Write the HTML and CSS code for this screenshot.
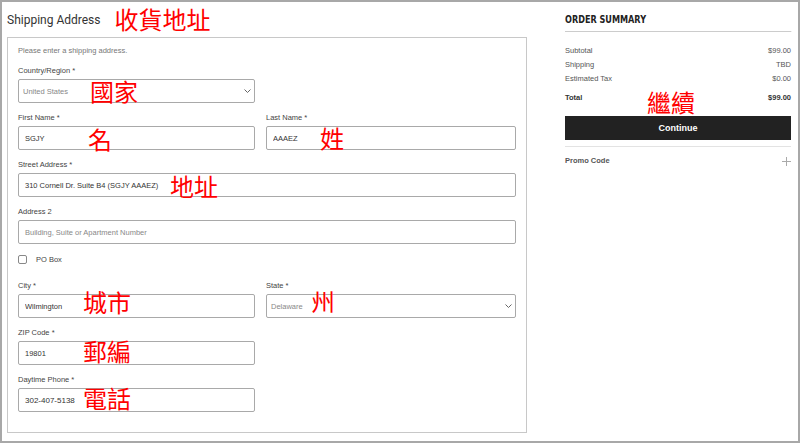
FILE: index.html
```html
<!DOCTYPE html>
<html lang="zh-Hant">
<head>
    <meta charset="UTF-8">
    <meta name="viewport" content="width=device-width, initial-scale=1.0">
    <title>Shipping Address</title>
    <link rel="stylesheet" href="styles.css">
</head>
<body>
    <div class="frame">
        <div class="shipping">
            <div class="page-title">
                <h1>Shipping Address</h1>
                <span class="note note-title">收貨地址</span>
            </div>

            <form class="address-box">
                <p class="intro">Please enter a shipping address.</p>

                <div class="grid">
                    <div class="field">
                        <label>Country/Region *</label>
                        <div class="select-wrap">
                            <select class="input placeholder">
                                <option>United States</option>
                            </select>
                            <svg class="chevron" width="7" height="4" viewBox="0 0 7 4"><path d="M0.5 0.5l3 3 3-3" fill="none" stroke="#666" stroke-width="1"/></svg>
                        </div>
                        <span class="note" style="left:72px;top:14px">國家</span>
                    </div>
                    <div></div>

                    <div class="field">
                        <label>First Name *</label>
                        <input class="input" type="text" value="SGJY">
                        <span class="note" style="left:70px;top:15px">名</span>
                    </div>
                    <div class="field">
                        <label>Last Name *</label>
                        <input class="input" type="text" value="AAAEZ">
                        <span class="note" style="left:54px;top:14px">姓</span>
                    </div>

                    <div class="field wide">
                        <label>Street Address *</label>
                        <input class="input" type="text" value="310 Cornell Dr. Suite B4 (SGJY AAAEZ)">
                        <span class="note" style="left:152px;top:15px">地址</span>
                    </div>

                    <div class="field wide">
                        <label>Address 2</label>
                        <input class="input" type="text" placeholder="Building, Suite or Apartment Number">
                    </div>

                    <div class="check-row wide">
                        <span class="checkbox"></span>
                        <span>PO Box</span>
                    </div>

                    <div class="field">
                        <label>City *</label>
                        <input class="input" type="text" value="Wilmington">
                        <span class="note" style="left:65px;top:10px">城市</span>
                    </div>
                    <div class="field">
                        <label>State *</label>
                        <div class="select-wrap">
                            <select class="input placeholder">
                                <option>Delaware</option>
                            </select>
                            <svg class="chevron" width="7" height="4" viewBox="0 0 7 4"><path d="M0.5 0.5l3 3 3-3" fill="none" stroke="#666" stroke-width="1"/></svg>
                        </div>
                        <span class="note" style="left:45px;top:9px">州</span>
                    </div>

                    <div class="field">
                        <label>ZIP Code *</label>
                        <input class="input" type="text" value="19801">
                        <span class="note" style="left:65px;top:12px">郵編</span>
                    </div>
                    <div></div>

                    <div class="field">
                        <label>Daytime Phone *</label>
                        <input class="input phone" type="text" value="302-407-5138">
                        <span class="note" style="left:65px;top:12px">電話</span>
                    </div>
                    <div></div>
                </div>
            </form>
        </div>

        <aside class="summary">
            <h2>ORDER SUMMARY</h2>
            <div class="lines">
                <div class="line"><span>Subtotal</span><span>$99.00</span></div>
                <div class="line"><span>Shipping</span><span>TBD</span></div>
                <div class="line"><span>Estimated Tax</span><span>$0.00</span></div>
            </div>
            <div class="line total">
                <span>Total</span><span>$99.00</span>
                <span class="note" style="left:82px;top:-1px">繼續</span>
            </div>
            <button type="button" class="continue">Continue</button>
            <div class="promo">
                <span>Promo Code</span>
                <svg width="9" height="9" viewBox="0 0 9 9"><path d="M4.5 0v9M0 4.5h9" stroke="#aaa" stroke-width="1"/></svg>
            </div>
        </aside>
    </div>
</body>
</html>
```

FILE: styles.css
```css
html, body {
    margin: 0;
    padding: 0;
    background-color: white;
}
body {
    font-family: "Liberation Sans", Arial, sans-serif;
    color: #444;
}
.frame {
    width: 800px;
    height: 443px;
    box-sizing: border-box;
    border: 2px solid #a8a8a8;
    display: flex;
    justify-content: space-between;
    padding: 0 7px 0 5px;
}
.shipping {
    width: 520px;
}
.page-title {
    height: 35px;
    display: flex;
    align-items: center;
}
h1 {
    margin: 0;
    font-family: Roboto, "Liberation Sans", sans-serif;
    font-size: 12px;
    font-weight: normal;
    color: #333;
}
.note {
    font-family: "Noto Sans CJK TC", sans-serif;
    font-size: 24px;
    line-height: 24px;
    font-weight: normal;
    color: #ff0000;
    position: absolute;
    white-space: nowrap;
    pointer-events: none;
}
.note-title {
    position: static;
    margin-left: 14px;
    margin-top: -2px;
}
.address-box {
    border: 1px solid #c8c8c8;
    padding: 7px 10px 11px 10px;
    height: 396px;
    box-sizing: border-box;
}
.intro {
    margin: 0 0 8px 0;
    font-size: 7.5px;
    line-height: 12px;
    color: #777;
}
.grid {
    display: grid;
    grid-template-columns: 237px 1fr;
    column-gap: 11px;
}
.wide {
    grid-column: 1 / 3;
}
.field {
    position: relative;
    margin-bottom: 9px;
}
label {
    display: block;
    font-size: 7.5px;
    line-height: 12px;
    margin-bottom: 2px;
    color: #444;
}
.input {
    display: block;
    width: 100%;
    height: 24px;
    box-sizing: border-box;
    border: 1px solid #a9a9a9;
    border-radius: 2px;
    padding: 0 6px;
    font-family: "Liberation Sans", Arial, sans-serif;
    font-size: 7.5px;
    color: #333;
    background-color: white;
    outline: none;
}
.input::placeholder {
    color: #888;
}
.placeholder {
    color: #888;
}
.phone {
    font-size: 8px;
}
.select-wrap {
    position: relative;
}
select.input {
    appearance: none;
    -webkit-appearance: none;
    padding-left: 4px;
}
.chevron {
    position: absolute;
    right: 4px;
    top: 10px;
}
.check-row {
    display: flex;
    align-items: center;
    height: 12px;
    margin-bottom: 15px;
    font-size: 7.5px;
    color: #444;
}
.checkbox {
    width: 7px;
    height: 7px;
    border: 1px solid #888;
    border-radius: 2px;
    margin-right: 9px;
}
.summary {
    width: 226px;
    padding-top: 11px;
}
h2 {
    margin: 0;
    font-family: "DejaVu Sans Condensed", "DejaVu Sans", sans-serif;
    font-size: 11px;
    line-height: 14px;
    font-weight: bold;
    color: #222;
    padding-bottom: 4px;
    border-bottom: 1px solid #ccc;
    transform: scaleX(0.82);
    transform-origin: left center;
    width: 122%;
}
.lines {
    margin-top: 12px;
}
.line {
    display: flex;
    justify-content: space-between;
    font-size: 7.5px;
    line-height: 14px;
    color: #555;
}
.total {
    position: relative;
    margin-top: 5px;
    font-weight: bold;
    color: #333;
}
.continue {
    display: block;
    width: 100%;
    height: 24px;
    margin-top: 11px;
    border: none;
    background-color: #222;
    color: white;
    font-family: "Liberation Sans", Arial, sans-serif;
    font-weight: bold;
    font-size: 9px;
    cursor: pointer;
}
.promo {
    margin-top: 6px;
    border-top: 1px solid #e3e3e3;
    padding-top: 7px;
    display: flex;
    justify-content: space-between;
    align-items: center;
    font-size: 7.5px;
    line-height: 14px;
    font-weight: bold;
    color: #555;
}
```
